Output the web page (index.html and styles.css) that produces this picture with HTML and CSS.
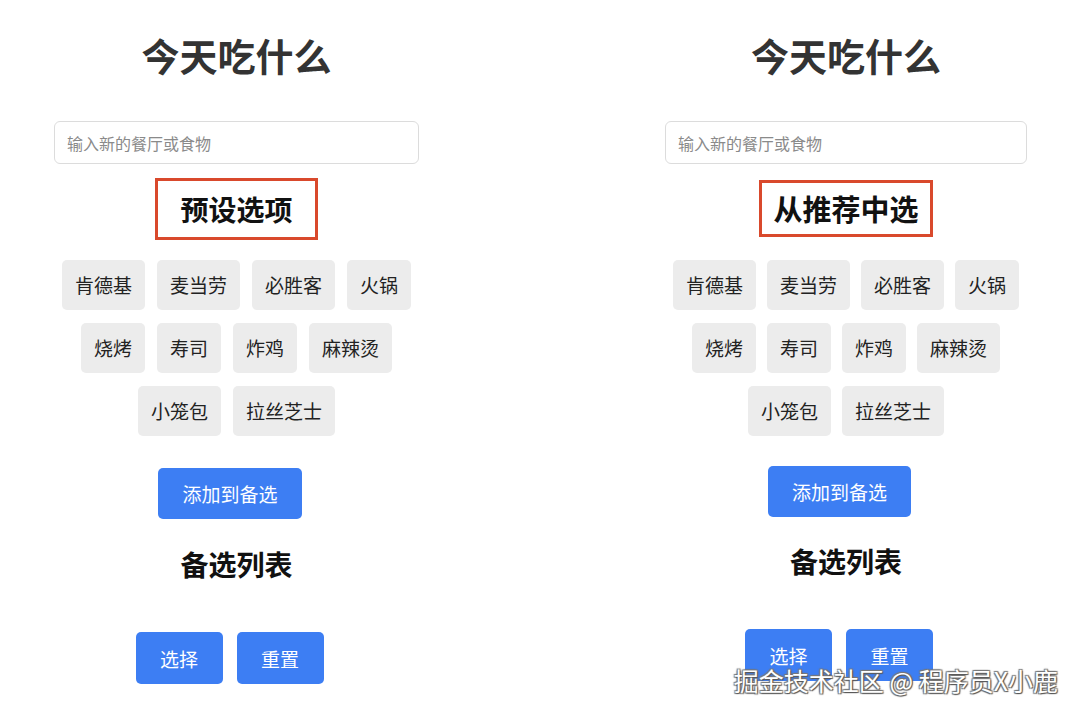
FILE: index.html
```html
<!DOCTYPE html>
<html lang="zh-CN">
<head>
  <meta charset="UTF-8">
  <meta name="viewport" content="width=device-width, initial-scale=1.0">
  <title>今天吃什么</title>
  <link rel="stylesheet" href="styles.css">
</head>
<body>
  <div class="page">
    <section class="panel">
      <h1 class="title">今天吃什么</h1>
      <input type="text" class="food-input" placeholder="输入新的餐厅或食物">
      <h2 class="section-title marked">预设选项</h2>
      <div class="tags">
        <span class="tag">肯德基</span>
        <span class="tag">麦当劳</span>
        <span class="tag">必胜客</span>
        <span class="tag">火锅</span>
        <span class="tag">烧烤</span>
        <span class="tag">寿司</span>
        <span class="tag">炸鸡</span>
        <span class="tag">麻辣烫</span>
        <span class="tag">小笼包</span>
        <span class="tag">拉丝芝士</span>
      </div>
      <div class="actions add-row">
        <button class="btn">添加到备选</button>
      </div>
      <h2 class="section-title list-title">备选列表</h2>
      <ul class="picked"></ul>
      <div class="actions">
        <button class="btn small">选择</button>
        <button class="btn small">重置</button>
      </div>
    </section>

    <section class="panel panel-alt">
      <h1 class="title">今天吃什么</h1>
      <input type="text" class="food-input" placeholder="输入新的餐厅或食物">
      <h2 class="section-title marked">从推荐中选</h2>
      <div class="tags">
        <span class="tag">肯德基</span>
        <span class="tag">麦当劳</span>
        <span class="tag">必胜客</span>
        <span class="tag">火锅</span>
        <span class="tag">烧烤</span>
        <span class="tag">寿司</span>
        <span class="tag">炸鸡</span>
        <span class="tag">麻辣烫</span>
        <span class="tag">小笼包</span>
        <span class="tag">拉丝芝士</span>
      </div>
      <div class="actions add-row">
        <button class="btn">添加到备选</button>
      </div>
      <h2 class="section-title list-title">备选列表</h2>
      <ul class="picked"></ul>
      <div class="actions">
        <button class="btn small">选择</button>
        <button class="btn small">重置</button>
      </div>
    </section>
  </div>
  <div class="watermark">掘金技术社区 @ 程序员X小鹿</div>
</body>
</html>
```

FILE: styles.css
```css
/* base */
body {
  margin: 0;
  padding: 0;
  background: #ffffff;
  font-family: "Noto Sans CJK SC", "Noto Sans", sans-serif;
  color: #222;
  overflow: hidden;
}
.page {
  display: flex;
  gap: 246px;
  padding-left: 54px;
}
.panel {
  width: 365px;
  display: flex;
  flex-direction: column;
  align-items: center;
  padding-top: 32px;
}
.panel-alt {
  width: 362px;
}

.title {
  margin: 0;
  font-size: 38px;
  line-height: 46px;
  font-weight: bold;
  color: #333;
}

.food-input {
  align-self: stretch;
  box-sizing: border-box;
  height: 43px;
  margin-top: 43px;
  padding: 0 12px;
  border: 1px solid #dcdcdc;
  border-radius: 6px;
  font-family: inherit;
  font-size: 16px;
  outline: none;
}
.food-input::placeholder {
  color: #8a8a8a;
}

.section-title {
  margin: 0;
  font-size: 28px;
  line-height: 34px;
  font-weight: bold;
  color: #111;
}
.marked {
  margin-top: 14px;
  padding: 11px 22px;
  border: 3px solid #d9492c;
}
.panel-alt .marked {
  margin-top: 16px;
  padding: 8px 11px;
  font-size: 29px;
  line-height: 35px;
}

.tags {
  align-self: stretch;
  display: flex;
  flex-wrap: wrap;
  justify-content: center;
  gap: 13px 12px;
  margin-top: 20px;
}
.panel-alt .tags {
  margin-top: 23px;
  gap: 13px 11px;
}
.tag {
  height: 50px;
  line-height: 50px;
  padding: 0 13px;
  background: #ececec;
  border-radius: 5px;
  font-size: 19px;
  color: #222;
}

.actions {
  display: flex;
  justify-content: center;
  margin-top: 51px;
}
.add-row {
  margin-top: 32px;
}
.panel-alt .add-row {
  margin-top: 30px;
}
.btn {
  height: 51px;
  padding: 0 24px;
  margin-right: 13px;
  border: none;
  border-radius: 5px;
  background: #3d7ef3;
  color: #fff;
  font-family: inherit;
  font-size: 19px;
}
.btn.small {
  height: 52px;
  width: 87px;
  padding: 0;
  margin-right: 14px;
}

.list-title {
  margin-top: 28px;
}
.panel-alt .list-title {
  margin-top: 27px;
}
.picked {
  margin: 0;
  padding: 0;
  list-style: none;
}

/* site watermark laid over the bottom right corner */
.watermark {
  position: absolute;
  right: 22px;
  top: 662px;
  font-size: 25px;
  line-height: 36px;
  color: #fff;
  text-shadow: 1px 1px 1px #555, -1px -1px 1px #777, 1px -1px 1px #777, -1px 1px 1px #777;
}
```
